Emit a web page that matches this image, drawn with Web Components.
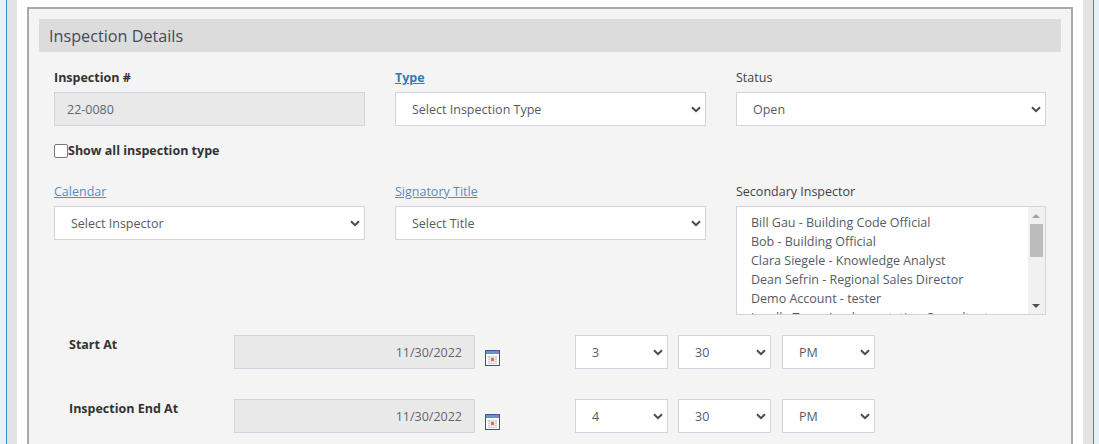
<!DOCTYPE html>
<html><head><meta charset="utf-8"><style>
html,body{margin:0;padding:0;height:444px;overflow:hidden;background:#fff}
body{font-family:"Open Sans","Noto Sans",sans-serif}
</style></head><body>
<page-shell>
<inspection-panel title="Inspection Details">
  <form-grid>
    <form-field label="Inspection #" strong><text-box value="22-0080"></text-box></form-field>
    <form-field label="Type" link strong><select-box value="Select Inspection Type"></select-box></form-field>
    <form-field label="Status"><select-box value="Open"></select-box></form-field>
    <check-row label="Show all inspection type"></check-row>
    <form-field label="Calendar" link><select-box value="Select Inspector"></select-box></form-field>
    <form-field label="Signatory Title" link><select-box value="Select Title"></select-box></form-field>
    <form-field label="Secondary Inspector"><list-box>
      <div>Bill Gau - Building Code Official</div><div>Bob - Building Official</div><div>Clara Siegele - Knowledge Analyst</div><div>Dean Sefrin - Regional Sales Director</div><div>Demo Account - tester</div><div>Janelle Tom - Implementation Consultant</div>
    </list-box></form-field>
  </form-grid>
  <time-row label="Start At" date="11/30/2022" hour="3" minute="30" ampm="PM"></time-row>
  <time-row label="Inspection End At" date="11/30/2022" hour="4" minute="30" ampm="PM"></time-row>
</inspection-panel>
</page-shell>
<script>
const def=(n,css,html)=>{customElements.define(n,class extends HTMLElement{connectedCallback(){if(this.shadowRoot)return;const r=this.attachShadow({mode:'open'});r.innerHTML='<style>'+css+'</style>'+(typeof html==='function'?html(this):html);}})};
const CH='<svg width="10" height="7" viewBox="0 0 10 7" style="flex:none"><path d="M1 1.2 5 5.2 9 1.2" fill="none" stroke="#4a4a4a" stroke-width="2"/></svg>';
def('page-shell',`:host{display:flex;height:444px;overflow:hidden;background:#fff}
.a{width:6px;background:#e9eff5;border-right:1px solid #3a8fc4}.b{width:10px;background:#e3e3e3}.c{width:10px;background:#fff}
.a.r{border-right:0;border-left:1px solid #3a8fc4;width:5px}
.m{flex:1;min-width:0;padding-top:7px}`,`<div class="a"></div><div class="b"></div><div class="c"></div><div class="m"><slot></slot></div><div class="c"></div><div class="b"></div><div class="a r"></div>`);
def('inspection-panel',`:host{display:block;border:2px solid #a9a9a9;border-bottom:0;background:#f4f4f4;padding:10px 10px 0;height:437px;box-sizing:border-box;overflow:hidden}
h2{margin:0;height:33px;background:#dcdcdc;padding-left:10px;font:400 16.2px/35px "Open Sans",sans-serif;color:#444a55}`,e=>`<h2>${e.getAttribute('title')}</h2><slot></slot>`);
def('form-grid',`:host{display:grid;grid-template-columns:311px 311px 310px;column-gap:30px;padding:16px 0 20px 15px;align-items:start}`,`<slot></slot>`);
def('form-field',`:host{display:flex;flex-direction:column;font:400 12.5px/18px "Open Sans",sans-serif;color:#3f4247}
.l{height:23px;padding-top:1px;line-height:18px}.s{font-weight:700;color:#333}.k{color:#5b8db8;text-decoration:underline}.s.k{color:#337ab7}`,
e=>`<div class="l ${e.hasAttribute('strong')?'s':''} ${e.hasAttribute('link')?'k':''}">${e.getAttribute('label')}</div><slot></slot>`);
def('text-box',`:host{display:block;box-sizing:border-box;height:34px;border:1px solid #cfd4de;background:#e9e9e9;padding-left:12px;font:400 12.5px/34px "Open Sans",sans-serif;color:#5f6670}`,e=>e.getAttribute('value'));
def('select-box',`:host{display:flex;align-items:center;justify-content:space-between;box-sizing:border-box;height:34px;border:1px solid #cfd4de;background:#fff;padding:0 4px 0 16px;font:400 12.5px/32px "Open Sans",sans-serif;color:#555b66}
span{margin-top:2px}`,e=>`<span>${e.getAttribute('value')}</span>`+CH);
def('check-row',`:host{grid-column:1/-1;display:flex;align-items:center;height:24px;margin:13px 0 19px;font:700 12.5px/18px "Open Sans",sans-serif;color:#333}
i{width:12px;height:12px;border:1px solid #777;border-radius:2px;background:#fff;flex:none}`,e=>`<i></i><span>${e.getAttribute('label')}</span>`);
def('list-box',`:host{display:flex;box-sizing:border-box;height:109px;border:1px solid #cfd4de;background:#fff;overflow:hidden;font:400 12.5px/19px "Open Sans",sans-serif;color:#555b66}
.t{flex:1;padding:6px 0 0 14px;white-space:nowrap;overflow:hidden}
.sb{width:17px;flex:none;background:#f1f1f1;display:flex;flex-direction:column;align-items:center;box-sizing:border-box}
.u{height:17px;display:flex;align-items:center}.th{width:13px;height:33px;background:#bcbcbc}.g{flex:1}`,
`<div class="t"><slot></slot></div><div class="sb"><div class="u"><svg width="9" height="6"><path d="M0 5H8L4 1Z" fill="#a3a3a3"/></svg></div><div class="th"></div><div class="g"></div><div class="u"><svg width="9" height="6"><path d="M0 1H8L4 5Z" fill="#505050"/></svg></div></div>`);
const CAL=`<svg width="15" height="16" viewBox="0 0 15 16" style="display:block"><rect x=".5" y=".5" width="14" height="15" fill="#fdfdfd" stroke="#35559c"/><rect x="1" y="1" width="13" height="3" fill="#6f90cb"/><rect x="3" y="6" width="9" height="8" fill="#cfcfcf"/><path d="M5.5 6v8M7.5 6v8M9.5 6v8M3 8.5h9M3 10.5h9M3 12.5h9" stroke="#f4f4f4" stroke-width=".7"/><rect x="6" y="8" width="3" height="3" fill="#d5705f"/></svg>`;
def('time-row',`:host{display:flex;align-items:flex-start;height:64px;padding-left:30px;font:400 12.5px/18px "Open Sans",sans-serif}
.l{width:165px;font-weight:700;color:#333;padding-top:1px;flex:none}
.d{width:241px;flex:none}.i{margin:15px 75px 0 10px;height:16px;width:15px;flex:none}
.s{display:flex;gap:10px}.s select-box{width:93px}.s select-box:last-child{margin-left:1px}`,
e=>`<div class="l">${e.getAttribute('label')}</div><text-box class="d" style="text-align:right;padding-right:12px" value="${e.getAttribute('date')}"></text-box><div class="i">${CAL}</div><div class="s"><select-box value="${e.getAttribute('hour')}"></select-box><select-box value="${e.getAttribute('minute')}"></select-box><select-box value="${e.getAttribute('ampm')}"></select-box></div>`);
</script>
</body></html>
